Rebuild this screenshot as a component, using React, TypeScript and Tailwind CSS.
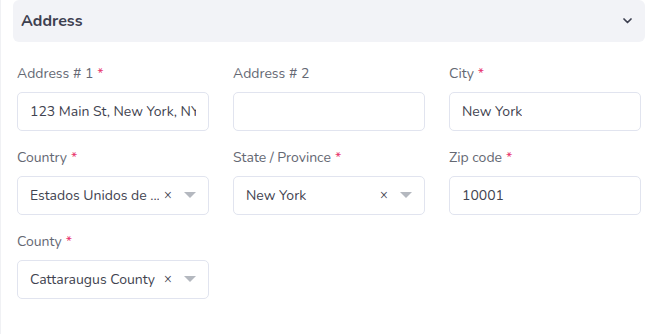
import React from "react";

const font = { fontFamily: '"Nunito", "Lato", "Open Sans", sans-serif' };

function Label({ text, req }: { text: string; req?: boolean }) {
  return (
    <div className="h-[20px] text-[14px] leading-[21px] text-[#646873] mb-[9px]">
      {text}
      {req && <span className="text-[#e8356d] ml-[4px]">*</span>}
    </div>
  );
}

function Input({ value }: { value?: string }) {
  return (
    <div className="h-[39px] border border-[#e1e4ef] rounded-[5px] bg-white flex items-center px-[12px] overflow-hidden">
      <span className="text-[14px] text-[#3f4350] whitespace-nowrap overflow-hidden">{value}</span>
    </div>
  );
}

function Select({ value }: { value: string }) {
  return (
    <div className="h-[39px] border border-[#e1e4ef] rounded-[5px] bg-white flex items-center pl-[12px] pr-[12px]">
      <span className="text-[14px] text-[#3f4350] whitespace-nowrap overflow-hidden flex-1 min-w-0">{value}</span>
      <span className="text-[13px] text-[#3f4350] ml-[4px] w-[10px] text-center">×</span>
      <svg width="12" height="7" viewBox="0 0 12 7" className="ml-[11px]">
        <path d="M0 0 L12 0 L6 6 Z" fill="#b4b8bf" />
      </svg>
    </div>
  );
}

function Field({ label, req, children }: { label: string; req?: boolean; children: React.ReactNode }) {
  return (
    <div className="flex flex-col">
      <Label text={label} req={req} />
      {children}
    </div>
  );
}

export default function App() {
  return (
    <div className="w-[656px] h-[334px] bg-white border-l border-[#f0f1f4] pl-[12px] pr-[11px]" style={font}>
      <div className="h-[42px] bg-[#f2f3f7] rounded-[6px] flex items-center justify-between pl-[8px] pr-[13px]">
        <span className="text-[16px] font-bold text-[#3d4050]">Address</span>
        <svg width="9" height="6" viewBox="0 0 9 6" fill="none">
          <path d="M1 1 L4.5 4.5 L8 1" stroke="#3d4050" strokeWidth="1.7" strokeLinecap="round" strokeLinejoin="round" />
        </svg>
      </div>
      <div className="grid grid-cols-3 gap-x-[24px] gap-y-[16px] px-[4px] pt-[21px]">
        <Field label="Address # 1" req>
          <Input value="123 Main St, New York, NY 10001" />
        </Field>
        <Field label="Address # 2">
          <Input value="" />
        </Field>
        <Field label="City" req>
          <Input value="New York" />
        </Field>
        <Field label="Country" req>
          <Select value="Estados Unidos de ..." />
        </Field>
        <Field label="State / Province" req>
          <Select value="New York" />
        </Field>
        <Field label="Zip code" req>
          <Input value="10001" />
        </Field>
        <Field label="County" req>
          <Select value="Cattaraugus County" />
        </Field>
      </div>
    </div>
  );
}
